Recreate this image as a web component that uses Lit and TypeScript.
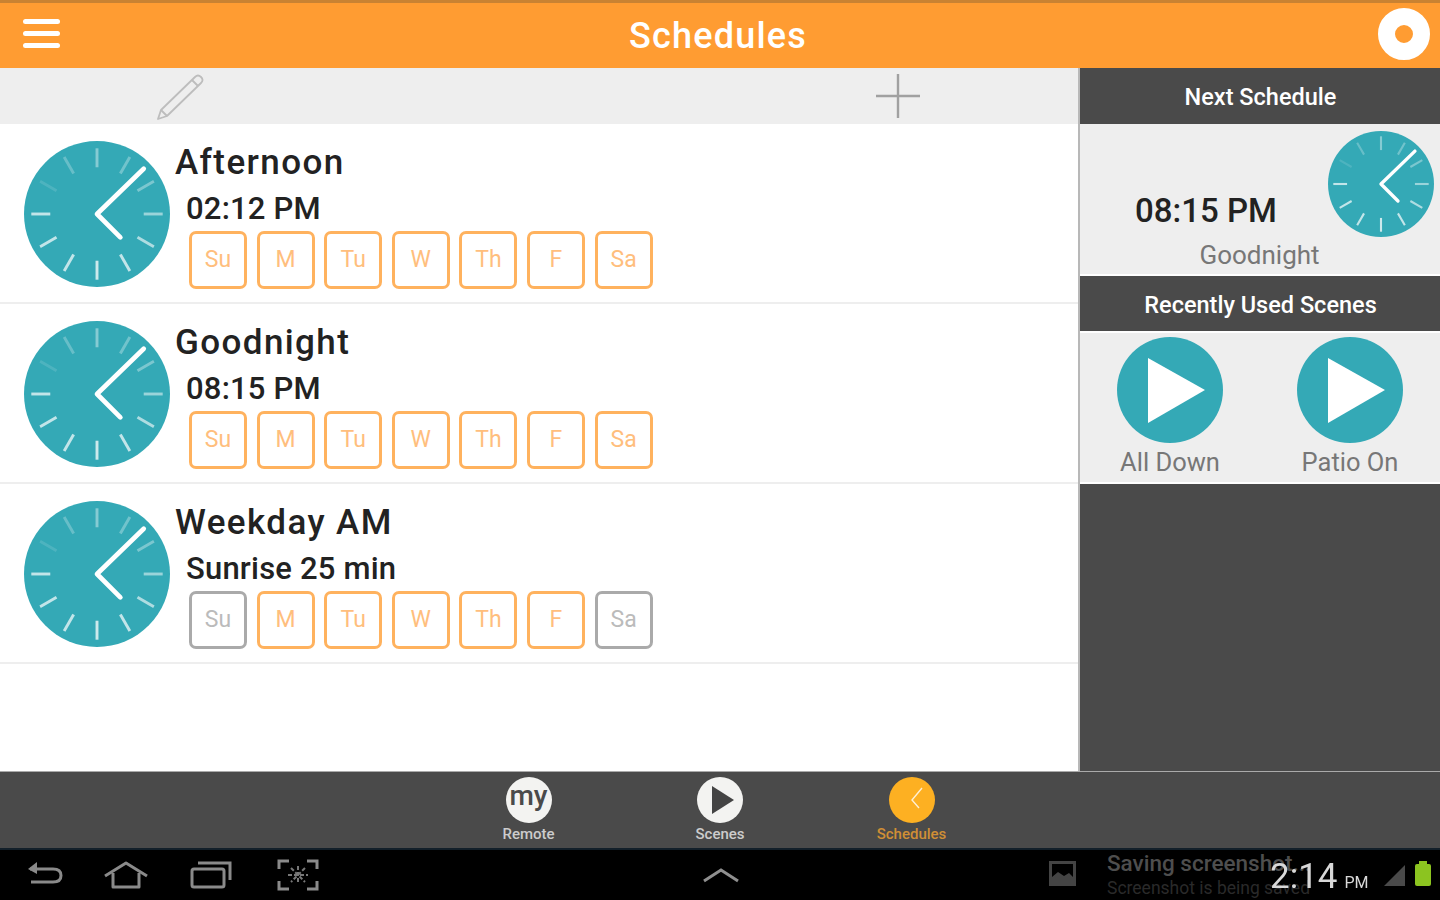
import { LitElement, html, css, svg } from "lit";
import { customElement } from "lit/decorators.js";

const clock = (size: number) => {
  const ticks = [] as unknown[];
  const ops = [0.4, 0.3, 0.35, 0.5, 0.6, 0.7, 0.75, 0.7, 0.7, 0.7, 0.12, 0.25];
  for (let i = 0; i < 12; i++) {
    const a = (i * 30 * Math.PI) / 180;
    const s = Math.sin(a), c = Math.cos(a);
    ticks.push(svg`<line x1=${50 + 32 * s} y1=${50 - 32 * c} x2=${50 + 45 * s} y2=${50 - 45 * c} stroke="#fff" stroke-width="2" opacity=${ops[i]}></line>`);
  }
  return html`<svg class="clock" width=${size} height=${size} viewBox="0 0 100 100">
    <circle cx="50" cy="50" r="50" fill="#34a9b6"></circle>
    ${ticks}
    <polyline points="82,19 50,50 66,66" fill="none" stroke="#fff" stroke-width="3.2" stroke-linecap="round" stroke-linejoin="round"></polyline>
  </svg>`;
};

const playIcon = html`<svg width="106" height="106" viewBox="0 0 106 106">
  <circle cx="53" cy="53" r="53" fill="#34a9b6"></circle>
  <polygon points="31,21 88,53 31,86" fill="#fff"></polygon>
</svg>`;

const DAYS = ["Su", "M", "Tu", "W", "Th", "F", "Sa"];
const SCHEDULES = [
  { name: "Afternoon", time: "02:12 PM", off: [] as string[] },
  { name: "Goodnight", time: "08:15 PM", off: [] as string[] },
  { name: "Weekday AM", time: "Sunrise 25 min", off: ["Su", "Sa"] },
];

@customElement("app-root")
export class AppRoot extends LitElement {
  static styles = css`
    :host { display: block; width: 1440px; height: 900px; overflow: hidden; font-family: Roboto, "Liberation Sans", sans-serif; }
    .page { width: 1440px; height: 900px; display: flex; flex-direction: column; background: #fff; filter: blur(0.7px); }
    .topbar { height: 68px; flex: none; box-sizing: border-box; background: #ff9c32; border-top: 3px solid #c98232; display: flex; align-items: center; justify-content: space-between; padding: 0 10px 3px 23px; position: relative; }
    .menu { display: flex; flex-direction: column; gap: 7px; width: 37px; margin-top: -2px; }
    .menu i { display: block; height: 5px; border-radius: 3px; background: #fff; }
    .title { position: absolute; left: 0; right: 4px; top: 11px; text-align: center; color: #fff; font-size: 36px; font-weight: 500; line-height: 44px; letter-spacing: 1.2px; }
    .ring { width: 52px; height: 52px; box-sizing: border-box; border-radius: 50%; border: 17px solid #fff; margin-top: -1px; }
    .body { flex: 1; display: flex; min-height: 0; }
    .left { width: 1078px; flex: none; display: flex; flex-direction: column; }
    .tools { height: 56px; flex: none; background: #eee; display: flex; align-items: center; }
    .tool-edit { margin-left: 155px; width: 50px; height: 50px; display: block; }
    .tool-add { margin-left: 669px; width: 48px; height: 48px; display: block; }
    .row { height: 180px; flex: none; box-sizing: border-box; border-bottom: 2px solid #eee; display: flex; padding: 17px 0 0 23.5px; }
    .row .clock { flex: none; }
    .info { margin-left: 5.5px; display: flex; flex-direction: column; }
    .name { font-size: 35px; line-height: 44px; color: #222; font-weight: 500; letter-spacing: 1.4px; white-space: nowrap; }
    .time { font-size: 31px; line-height: 36px; color: #222; margin: 6px 0 0 11px; font-weight: 500; letter-spacing: 0.2px; white-space: nowrap; }
    .chips { display: flex; gap: 9.6px; margin: 3.500px 0 0 14px; }
    .chip { width: 58px; height: 58px; box-sizing: border-box; border: 3px solid #ffb25e; border-radius: 7px; color: #ffbe7d; font-size: 23px; display: flex; align-items: center; justify-content: center; }
    .chip.off { border-color: #aaa; color: #bbb; }
    .side { flex: 1; border-left: 2px solid #b8b8b8; background: #4a4a4a; display: flex; flex-direction: column; }
    .side-head { height: 56px; flex: none; display: flex; align-items: center; justify-content: center; color: #fff; font-size: 23.5px; font-weight: 500; padding: 2px 0 0 1px; box-sizing: border-box; }
    .side-head.second { height: 55px; }
    .box { background: #eee; flex: none; height: 152px; border-bottom: 2px solid #fff; box-sizing: border-box; }
    .next { display: flex; flex-direction: column; }
    .next-top { display: flex; justify-content: space-between; padding: 7px 6px 0 55px; }
    .next-time { font-size: 33px; line-height: 40px; color: #222; align-self: flex-end; margin-bottom: 6px; font-weight: 500; }
    .next-name { font-size: 26px; line-height: 30px; color: #777; text-align: center; margin-top: 3px; padding-right: 1px; }
    .scenes { display: flex; padding: 4px 0 0 37px; gap: 74px; height: 153px; border-top: 2px solid #fff; }
    .scene { width: 106px; display: flex; flex-direction: column; align-items: center; color: #777; font-size: 25.5px; line-height: 30px; white-space: nowrap; }
    .scene span { margin-top: 4px; }
    .nav { height: 77px; flex: none; background: #4a4a4a; border-top: 1px solid #aaa; box-sizing: border-box; display: flex; padding: 5px 0 0 505px; }
    .nav-item { width: 47px; display: flex; flex-direction: column; align-items: center; color: #ccc; font-size: 15px; line-height: 18px; white-space: nowrap; font-weight: 500; }
    .nav-item + .nav-item { margin-left: 144.500px; }
    .nav-item.active { color: #d08f35; }
    .nav-item .bub { width: 46px; height: 46px; border-radius: 50%; background: #f3f3f1; display: flex; align-items: center; justify-content: center; margin-bottom: 2px; color: #4a4a4a; font-size: 28px; font-weight: 500; line-height: 40px; overflow: hidden; }
    .active-ic { margin-bottom: 2px; }
    .my { margin-top: -8px; }
    .sys { height: 52px; flex: none; background: #000; border-top: 2px solid #13202a; box-sizing: border-box; display: flex; align-items: center; position: relative; color: #888; }
    .sys svg { display: block; flex: none; }
    .sys-left { display: flex; align-items: center; padding-left: 25px; }
    .gap-home { margin-left: 40px; }
    .gap-recent { margin-left: 41px; }
    .gap-shot { margin-left: 45px; }
    .up { position: absolute; left: 703px; top: 17px; }
    .notif-ic { position: absolute; left: 1049px; top: 10px; }
    .notif { position: absolute; left: 1107px; top: -1px; color: #4e4e4e; font-weight: 500; font-size: 22.5px; line-height: 28px; white-space: nowrap; }
    .notif small { display: block; color: #2a2a2a; font-size: 17.5px; line-height: 20px; font-weight: 400; margin-top: 1px; }
    .clocktxt { position: absolute; left: 1270px; top: 7px; color: #d8d8d8; font-size: 35px; line-height: 40px; white-space: nowrap; }
    .clocktxt small { font-size: 16px; margin-left: 3px; }
    .signal { position: absolute; left: 1384px; top: 15px; }
    .batt { position: absolute; left: 1414px; top: 11px; }
  `;

  render() {
    return html`<div class="page">
      <header class="topbar">
        <div class="menu"><i></i><i></i><i></i></div>
        <div class="title">Schedules</div>
        <div class="ring"></div>
      </header>
      <div class="body">
        <div class="left">
          <div class="tools">
            <svg class="tool-edit" viewBox="0 0 50 50" fill="none" stroke="#bdbdbd" stroke-width="1.8" stroke-linejoin="round">
              <path d="M3 48 L6 39 L40 6 Q43 3 46 6 Q49 9 46 12 L12 45 Z"></path>
              <path d="M6 39 L12 45 M37 9 L43 15"></path>
            </svg>
            <svg class="tool-add" viewBox="0 0 48 48" stroke="#a0a0a0" stroke-width="2.4">
              <path d="M24 2V46M2 24H46"></path>
            </svg>
          </div>
          ${SCHEDULES.map(s => html`<div class="row">
            ${clock(146)}
            <div class="info">
              <div class="name">${s.name}</div>
              <div class="time">${s.time}</div>
              <div class="chips">${DAYS.map(d => html`<div class="chip ${s.off.includes(d) ? "off" : ""}">${d}</div>`)}</div>
            </div>
          </div>`)}
        </div>
        <aside class="side">
          <div class="side-head">Next Schedule</div>
          <div class="box next">
            <div class="next-top">
              <div class="next-time">08:15 PM</div>
              ${clock(106)}
            </div>
            <div class="next-name">Goodnight</div>
          </div>
          <div class="side-head second">Recently Used Scenes</div>
          <div class="box scenes">
            <div class="scene">${playIcon}<span>All Down</span></div>
            <div class="scene">${playIcon}<span>Patio On</span></div>
          </div>
        </aside>
      </div>
      <nav class="nav">
        <div class="nav-item"><div class="bub"><span class="my">my</span></div>Remote</div>
        <div class="nav-item"><div class="bub">
          <svg width="46" height="46" viewBox="0 0 46 46"><polygon points="15,9 37,23 15,37" fill="#444"></polygon></svg>
        </div>Scenes</div>
        <div class="nav-item active">
          <svg class="active-ic" width="46" height="46" viewBox="0 0 46 46">
            <circle cx="23" cy="23" r="23" fill="#fdb022"></circle>
            <polyline points="33,11 23,23 30,31" fill="none" stroke="#fff" stroke-width="1.4" opacity=".8"></polyline>
          </svg>Schedules</div>
      </nav>
      <footer class="sys">
        <div class="sys-left">
          <svg width="38" height="30" viewBox="0 0 38 30" fill="none" stroke="#8a8a8a" stroke-width="3">
            <path d="M5 9H28Q36 9 36 15.500Q36 22 28 22H6"></path>
            <path d="M12 2 L3 9 L12 14 Z" fill="#8a8a8a" stroke="none"></path>
          </svg>
          <svg class="gap-home" width="46" height="30" viewBox="0 0 46 30" fill="none" stroke="#8a8a8a" stroke-width="3" stroke-linejoin="round">
            <path d="M2 16 L23 3 L44 16"></path>
            <path d="M10 13V27H36V13"></path>
          </svg>
          <svg class="gap-recent" width="42" height="30" viewBox="0 0 42 30" fill="none" stroke="#8a8a8a" stroke-width="3">
            <rect x="2" y="9" width="32" height="18" rx="2"></rect>
            <path d="M8 3H40V20"></path>
          </svg>
          <svg class="gap-shot" width="42" height="34" viewBox="0 0 42 34" fill="none" stroke="#8a8a8a" stroke-width="3">
            <path d="M2 11V3H12M30 3H40V11M2 23V31H12M30 31H40V23"></path>
            <path d="M11 17H31M21 8V26M14 10L28 24M28 10L14 24" stroke-width="2" stroke-dasharray="4 2" stroke="#777"></path>
          </svg>
        </div>
        <svg class="up" width="36" height="16" viewBox="0 0 36 16" fill="none" stroke="#8f8f8f" stroke-width="3"><path d="M1 14L18 3L35 14"></path></svg>
        <svg class="notif-ic" width="28" height="28" viewBox="0 0 28 28">
          <rect x="1.500" y="2.500" width="24" height="22" fill="none" stroke="#444" stroke-width="3"></rect>
          <path d="M3 24V17L9 12L15 16L20 13L25 18V24Z" fill="#444"></path>
        </svg>
        <div class="notif">Saving screenshot...<small>Screenshot is being saved</small></div>
        <div class="clocktxt">2:14<small> PM</small></div>
        <svg class="signal" width="22" height="21" viewBox="0 0 22 21"><polygon points="21,0 21,21 0,21" fill="#4a4a4a"></polygon></svg>
        <svg class="batt" width="18" height="25" viewBox="0 0 18 25"><rect x="1" y="3" width="16" height="22" rx="2" fill="#8cc420"></rect><rect x="5" y="0" width="8" height="4" fill="#8cc420"></rect></svg>
      </footer>
    </div>`;
  }
}
